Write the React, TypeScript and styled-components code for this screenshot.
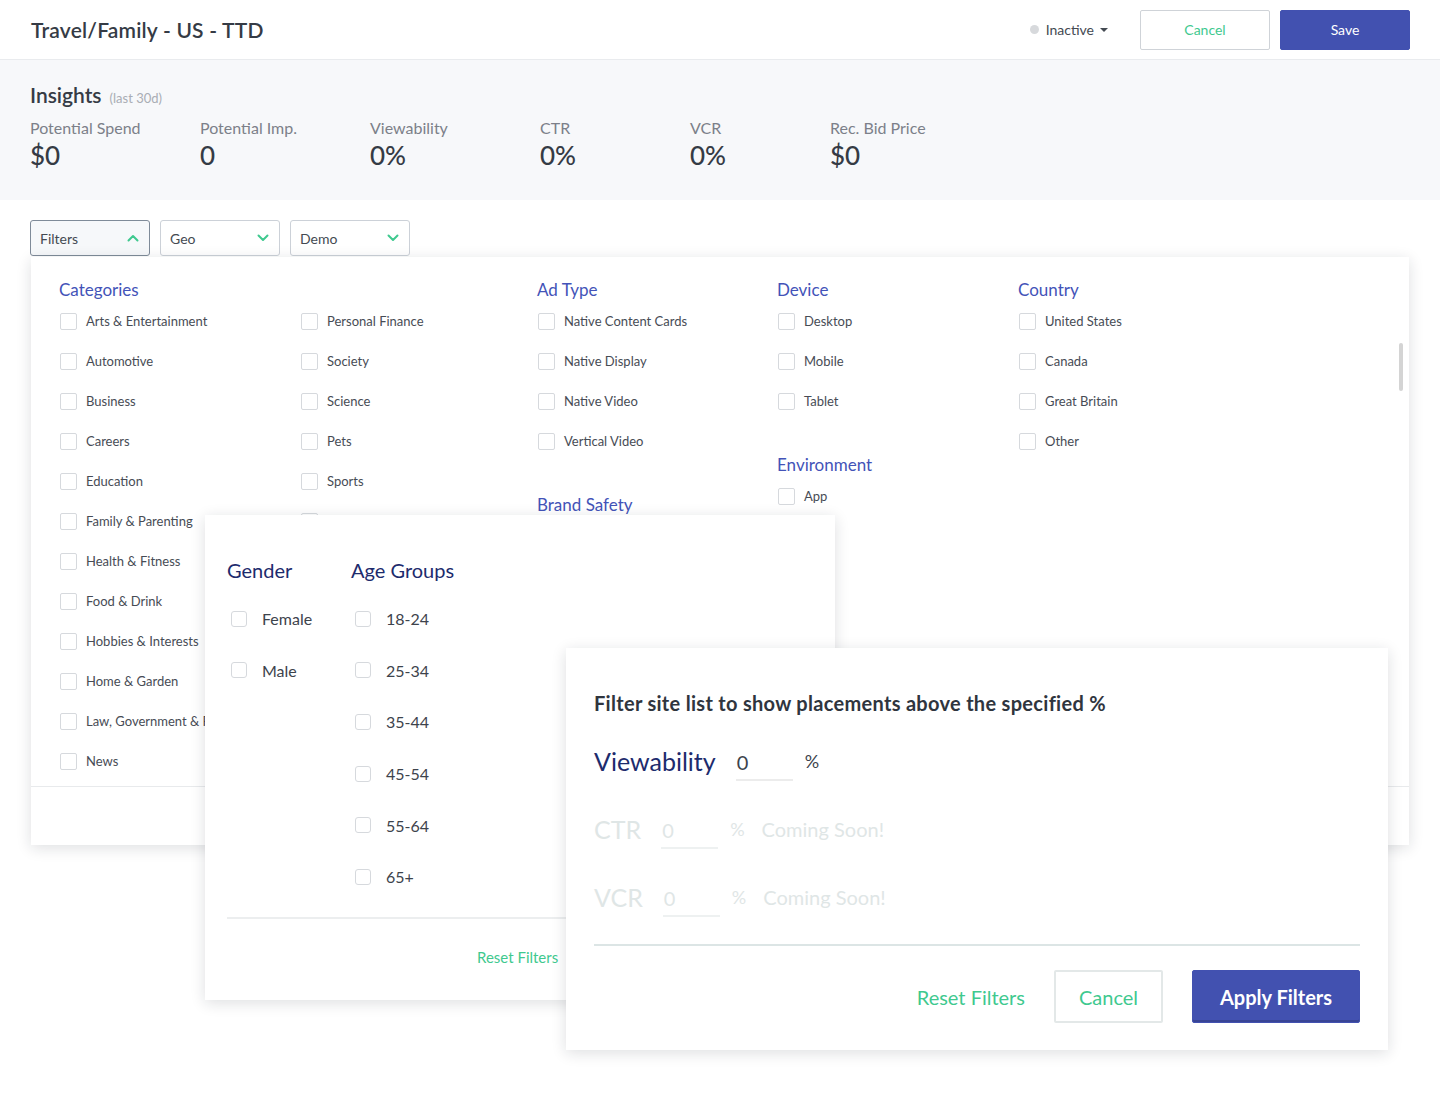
import React from "react";
import styled, { createGlobalStyle } from "styled-components";

const C = {
  text: "#353b45",
  label: "#7c8089",
  blue: "#4353b8",
  navy: "#1d2b6d",
  green: "#3fc98f",
  indigo: "#4251b0",
  border: "#d6d9dd",
  faded: "#dfe6e6",
};

const GlobalStyle = createGlobalStyle`
  html, body { margin: 0; padding: 0; background: #fff; }
  body { font-family: Lato, "Open Sans", sans-serif; color: ${C.text}; }
  * { box-sizing: border-box; }
`;

const Page = styled.div`
  position: relative;
  width: 1440px;
  height: 1098px;
  overflow: hidden;
  background: #fff;
`;

const Header = styled.header`
  height: 60px;
  display: flex;
  align-items: center;
  justify-content: space-between;
  padding: 0 30px 0 31px;
  border-bottom: 1px solid #e9ebee;
`;

const Title = styled.h1`
  margin: 0;
  font-size: 21px;
  font-weight: 600;
  color: ${C.text};
  letter-spacing: 0.2px;
`;

const HeaderRight = styled.div`
  display: flex;
  align-items: center;
`;

const Status = styled.div`
  display: flex;
  align-items: center;
  font-size: 14px;
  color: #444a52;
  margin-right: 22px;
`;

const Dot = styled.span`
  width: 9px;
  height: 9px;
  border-radius: 50%;
  background: #d7d9dc;
  margin-right: 7px;
`;

const Caret = styled.span`
  width: 0;
  height: 0;
  margin-left: 6px;
  border-left: 4px solid transparent;
  border-right: 4px solid transparent;
  border-top: 4px solid #444a52;
`;

const HeaderButton = styled.button<{ $primary?: boolean }>`
  width: 130px;
  height: 40px;
  margin-left: 10px;
  border-radius: 2px;
  font-family: inherit;
  font-size: 14px;
  cursor: pointer;
  border: 1px solid ${(p) => (p.$primary ? C.indigo : "#cfd3d8")};
  background: ${(p) => (p.$primary ? C.indigo : "#fff")};
  color: ${(p) => (p.$primary ? "#fff" : C.green)};
`;

const Insights = styled.section`
  height: 140px;
  background: #f7f8fa;
  padding: 22px 30px 0;
`;

const InsightsTitle = styled.div`
  display: flex;
  align-items: baseline;
  line-height: 26px;
  font-size: 21px;
  font-weight: 600;
  color: ${C.text};
`;

const Muted = styled.span`
  font-size: 13px;
  font-weight: 400;
  color: #a9adb4;
  margin-left: 8px;
`;

const Metrics = styled.div`
  display: grid;
  grid-template-columns: 170px 170px 170px 150px 140px auto;
  margin-top: 7px;
`;

const MetricLabel = styled.div`
  font-size: 16px;
  line-height: 20px;
  color: ${C.label};
`;

const MetricValue = styled.div`
  font-size: 26px;
  line-height: 34px;
  color: ${C.text};
  font-weight: 500;
`;

const FilterBar = styled.div`
  display: flex;
  gap: 10px;
  padding: 20px 30px 0;
`;

const Select = styled.div<{ $open?: boolean }>`
  width: 120px;
  height: 36px;
  display: flex;
  align-items: center;
  justify-content: space-between;
  padding: 0 10px 0 9px;
  font-size: 14px;
  color: #444a52;
  border-radius: 3px;
  border: 1px solid ${(p) => (p.$open ? "#7f8b99" : "#ccd1d8")};
  background: ${(p) => (p.$open ? "#f6f8fa" : "#fff")};
`;

const Chevron = ({ up }: { up?: boolean }) => (
  <svg width="12" height="8" viewBox="0 0 12 8">
    <path
      d={up ? "M1.5 6.5 L6 2 L10.5 6.5" : "M1.5 1.5 L6 6 L10.5 1.5"}
      fill="none"
      stroke={C.green}
      strokeWidth="2"
      strokeLinecap="round"
      strokeLinejoin="round"
    />
  </svg>
);

/* ---------- main filter panel ---------- */

const Panel = styled.div`
  position: absolute;
  background: #fff;
  box-shadow: 0 3px 14px rgba(20, 30, 40, 0.14);
  display: flex;
  flex-direction: column;
`;

const FilterPanel = styled(Panel)`
  left: 31px;
  top: 257px;
  width: 1378px;
  height: 588px;
`;

const PanelBody = styled.div`
  height: 529px;
  display: grid;
  grid-template-columns: 478px 240px 241px auto;
  padding: 22px 28px 0;
  overflow: hidden;
`;

const PanelFooter = styled.div`
  flex: 1;
  border-top: 1px solid #e8eaec;
`;

const ScrollThumb = styled.div`
  position: absolute;
  right: 6px;
  top: 86px;
  width: 4px;
  height: 48px;
  border-radius: 2px;
  background: #d4d4d4;
`;

const Group = styled.div``;

const GroupHeading = styled.h3<{ $gap?: boolean }>`
  margin: ${(p) => (p.$gap ? "33px" : "0")} 0 0;
  font-size: 17px;
  line-height: 22px;
  font-weight: 400;
  color: ${C.blue};
`;

const TwoCols = styled.div`
  display: grid;
  grid-template-columns: 241px auto;
`;

const Row = styled.label`
  height: 40px;
  display: flex;
  align-items: center;
  gap: 9px;
  padding-left: 1px;
  font-size: 13px;
  color: #474c55;
  white-space: nowrap;
`;

const Box = styled.span<{ $size?: number; $radius?: number }>`
  flex: none;
  width: ${(p) => p.$size ?? 17}px;
  height: ${(p) => p.$size ?? 17}px;
  border: 1px solid ${C.border};
  border-radius: ${(p) => p.$radius ?? 2}px;
  background: #fff;
`;

const CheckList = ({ items }: { items: string[] }) => (
  <div>
    {items.map((t) => (
      <Row key={t}>
        <Box />
        {t}
      </Row>
    ))}
  </div>
);

/* ---------- demo panel ---------- */

const DemoPanel = styled(Panel)`
  left: 205px;
  top: 515px;
  width: 630px;
  height: 485px;
  padding: 42px 22px 0;
`;

const DemoCols = styled.div`
  display: grid;
  grid-template-columns: 124px auto;
`;

const DemoHeading = styled.h3`
  margin: 0 0 10px;
  font-size: 20px;
  line-height: 26px;
  font-weight: 400;
  color: ${C.navy};
`;

const DemoRow = styled.label`
  height: 51.6px;
  display: flex;
  align-items: center;
  gap: 15px;
  padding-left: 4px;
  font-size: 16px;
  color: #3d434c;
`;

const Divider = styled.div<{ $color?: string }>`
  height: 2px;
  background: ${(p) => p.$color ?? "#eceeef"};
`;

const DemoDivider = styled(Divider)`
  margin-top: 14px;
`;

const DemoFooter = styled.div`
  flex: 1;
  display: flex;
  align-items: center;
  justify-content: flex-end;
  gap: 26px;
  padding-bottom: 4px;
`;

const TextLink = styled.span<{ $size?: number }>`
  font-size: ${(p) => p.$size ?? 15}px;
  color: ${C.green};
  white-space: nowrap;
`;

const DemoButton = styled.span<{ $primary?: boolean }>`
  height: 40px;
  padding: 0 18px;
  display: flex;
  align-items: center;
  font-size: 15px;
  border-radius: 2px;
  border: 1px solid ${(p) => (p.$primary ? C.indigo : "#d6dbdb")};
  background: ${(p) => (p.$primary ? C.indigo : "#fff")};
  color: ${(p) => (p.$primary ? "#fff" : C.green)};
`;

/* ---------- performance panel ---------- */

const PerfPanel = styled(Panel)`
  left: 566px;
  top: 648px;
  width: 822px;
  height: 402px;
  padding: 42px 28px 0;
`;

const PerfTitle = styled.h2`
  margin: 0 0 11px;
  font-size: 20px;
  line-height: 26px;
  font-weight: 700;
  color: #2f353e;
  letter-spacing: 0.3px;
`;

const PerfRow = styled.div<{ $disabled?: boolean }>`
  height: 68px;
  display: flex;
  align-items: center;
  color: ${(p) => (p.$disabled ? C.faded : C.navy)};
`;

const PerfLabel = styled.span`
  font-size: 25px;
  margin-right: 20px;
`;

const PerfInput = styled.span<{ $disabled?: boolean }>`
  width: 57px;
  height: 40px;
  padding: 4px 0 0 1px;
  display: flex;
  align-items: center;
  font-size: 20px;
  color: ${(p) => (p.$disabled ? C.faded : "#3d434c")};
  border-bottom: 2px solid ${(p) => (p.$disabled ? "#eef1f1" : "#ececec")};
`;

const Percent = styled.span<{ $disabled?: boolean }>`
  font-size: 18px;
  margin-left: 12px;
  color: ${(p) => (p.$disabled ? C.faded : "#3d434c")};
`;

const Soon = styled.span`
  font-size: 20px;
  margin-left: 17px;
  color: ${C.faded};
`;

const PerfDivider = styled(Divider)`
  margin-top: 13px;
  background: #dce5e5;
`;

const PerfFooter = styled.div`
  display: flex;
  align-items: center;
  justify-content: flex-end;
  gap: 29px;
  margin-top: 24px;
`;

const BigButton = styled.button<{ $primary?: boolean }>`
  height: 53px;
  width: ${(p) => (p.$primary ? 168 : 109)}px;
  font-family: inherit;
  font-size: 20px;
  font-weight: ${(p) => (p.$primary ? 700 : 400)};
  border-radius: 2px;
  border: ${(p) => (p.$primary ? `1px solid ${C.indigo}` : "2px solid #e3e8e8")};
  background: ${(p) => (p.$primary ? C.indigo : "#fff")};
  color: ${(p) => (p.$primary ? "#fff" : C.green)};
  box-shadow: ${(p) => (p.$primary ? "inset 0 -2px 0 rgba(0,0,0,0.15)" : "none")};
`;

const metrics = [
  ["Potential Spend", "$0"],
  ["Potential Imp.", "0"],
  ["Viewability", "0%"],
  ["CTR", "0%"],
  ["VCR", "0%"],
  ["Rec. Bid Price", "$0"],
];

const catA = [
  "Arts & Entertainment",
  "Automotive",
  "Business",
  "Careers",
  "Education",
  "Family & Parenting",
  "Health & Fitness",
  "Food & Drink",
  "Hobbies & Interests",
  "Home & Garden",
  "Law, Government & Politics",
  "News",
];
const catB = ["Personal Finance", "Society", "Science", "Pets", "Sports", "Style & Fashion"];

const ages = ["18-24", "25-34", "35-44", "45-54", "55-64", "65+"];

export default function App() {
  return (
    <Page>
      <GlobalStyle />
      <Header>
        <Title>Travel/Family - US - TTD</Title>
        <HeaderRight>
          <Status>
            <Dot />
            Inactive
            <Caret />
          </Status>
          <HeaderButton>Cancel</HeaderButton>
          <HeaderButton $primary>Save</HeaderButton>
        </HeaderRight>
      </Header>

      <Insights>
        <InsightsTitle>
          Insights<Muted>(last 30d)</Muted>
        </InsightsTitle>
        <Metrics>
          {metrics.map(([l, v]) => (
            <div key={l}>
              <MetricLabel>{l}</MetricLabel>
              <MetricValue>{v}</MetricValue>
            </div>
          ))}
        </Metrics>
      </Insights>

      <FilterBar>
        <Select $open>
          Filters <Chevron up />
        </Select>
        <Select>
          Geo <Chevron />
        </Select>
        <Select>
          Demo <Chevron />
        </Select>
      </FilterBar>

      <FilterPanel>
        <PanelBody>
          <Group>
            <GroupHeading>Categories</GroupHeading>
            <TwoCols>
              <CheckList items={catA} />
              <CheckList items={catB} />
            </TwoCols>
          </Group>
          <Group>
            <GroupHeading>Ad Type</GroupHeading>
            <CheckList
              items={["Native Content Cards", "Native Display", "Native Video", "Vertical Video"]}
            />
            <GroupHeading $gap>Brand Safety</GroupHeading>
            <CheckList items={["Standard"]} />
          </Group>
          <Group>
            <GroupHeading>Device</GroupHeading>
            <CheckList items={["Desktop", "Mobile", "Tablet"]} />
            <GroupHeading $gap>Environment</GroupHeading>
            <CheckList items={["App", "Web"]} />
          </Group>
          <Group>
            <GroupHeading>Country</GroupHeading>
            <CheckList items={["United States", "Canada", "Great Britain", "Other"]} />
          </Group>
        </PanelBody>
        <PanelFooter />
        <ScrollThumb />
      </FilterPanel>

      <DemoPanel>
        <DemoCols>
          <div>
            <DemoHeading>Gender</DemoHeading>
            {["Female", "Male"].map((g) => (
              <DemoRow key={g}>
                <Box $size={16} $radius={3} />
                {g}
              </DemoRow>
            ))}
          </div>
          <div>
            <DemoHeading>Age Groups</DemoHeading>
            {ages.map((a) => (
              <DemoRow key={a}>
                <Box $size={16} $radius={3} />
                {a}
              </DemoRow>
            ))}
          </div>
        </DemoCols>
        <DemoDivider />
        <DemoFooter>
          <TextLink>Reset Filters</TextLink>
          <DemoButton>Cancel</DemoButton>
          <DemoButton $primary>Apply Filters</DemoButton>
        </DemoFooter>
      </DemoPanel>

      <PerfPanel>
        <PerfTitle>Filter site list to show placements above the specified %</PerfTitle>
        <PerfRow>
          <PerfLabel>Viewability</PerfLabel>
          <PerfInput>0</PerfInput>
          <Percent>%</Percent>
        </PerfRow>
        <PerfRow $disabled>
          <PerfLabel>CTR</PerfLabel>
          <PerfInput $disabled>0</PerfInput>
          <Percent $disabled>%</Percent>
          <Soon>Coming Soon!</Soon>
        </PerfRow>
        <PerfRow $disabled>
          <PerfLabel>VCR</PerfLabel>
          <PerfInput $disabled>0</PerfInput>
          <Percent $disabled>%</Percent>
          <Soon>Coming Soon!</Soon>
        </PerfRow>
        <PerfDivider />
        <PerfFooter>
          <TextLink $size={20}>Reset Filters</TextLink>
          <BigButton>Cancel</BigButton>
          <BigButton $primary>Apply Filters</BigButton>
        </PerfFooter>
      </PerfPanel>
    </Page>
  );
}
